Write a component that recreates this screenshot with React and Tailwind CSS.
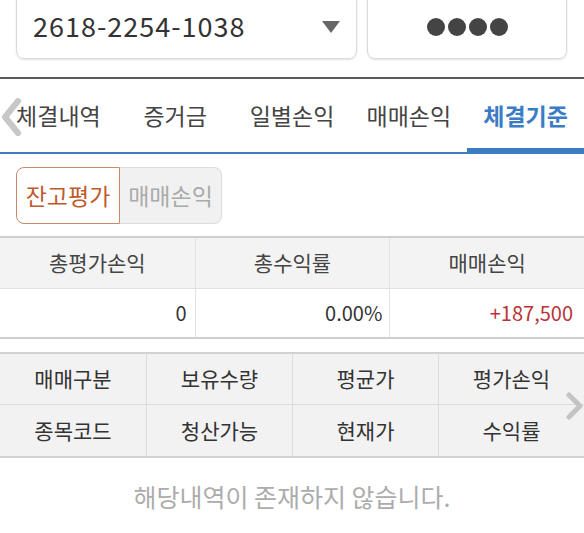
import React, { useState } from 'react'

const font = { fontFamily: '"Noto Sans CJK KR", "Noto Sans", sans-serif' }

const tabs = ['체결내역', '증거금', '일별손익', '매매손익', '체결기준']

const summary = [
  { label: '총평가손익', value: '0', color: 'text-[#333]', pad: 'pr-2' },
  { label: '총수익률', value: '0.00%', color: 'text-[#333]', pad: 'pr-[7px]' },
  { label: '매매손익', value: '+187,500', color: 'text-[#b8343a]', pad: 'pr-[11px]' },
]

const columns = [
  ['매매구분', '종목코드'],
  ['보유수량', '청산가능'],
  ['평균가', '현재가'],
  ['평가손익', '수익률'],
]

const App = () => {
  const [activeTab, setActiveTab] = useState(4)
  const [mode, setMode] = useState('balance')

  return (
    <div className="w-[584px] h-[533px] overflow-hidden bg-white text-[#333]" style={font}>
      {/* account row */}
      <div className="flex gap-[10px] pl-4 pr-[17px] pb-[18px]">
        <div className="-mt-[12px] h-[71px] w-[341px] flex items-center justify-between pl-[16px] pr-[16px] pt-[6px] border border-[#dadada] rounded-lg shadow-[0_1px_2px_rgba(0,0,0,0.12)]">
          <span className="text-[27px] tracking-[1px] text-[#333]">2618-2254-1038</span>
          <svg width="18" height="12" viewBox="0 0 18 12">
            <polygon points="0,0 18,0 9,12" fill="#666" />
          </svg>
        </div>
        <div className="-mt-[12px] h-[71px] flex-1 flex items-center justify-center pt-[6px] border border-[#dadada] rounded-lg shadow-[0_1px_2px_rgba(0,0,0,0.12)]">
          <div className="flex gap-[3px]">
            {[0, 1, 2, 3].map(i => (
              <span key={i} className="w-[18px] h-[18px] rounded-full bg-[#444]" />
            ))}
          </div>
        </div>
      </div>

      <div className="border-t-2 border-[#595959]" />

      {/* tabs */}
      <div className="relative flex h-[75px] border-b-2 border-[#3b7cc4]">
        {tabs.map((t, i) => (
          <button
            key={t}
            onClick={() => setActiveTab(i)}
            className={`w-1/5 flex items-center justify-center pt-[3px] border-b-[4px] text-[23px] ${
              i === activeTab ? 'border-[#3b7cc4] text-[#3b7cc4] font-bold' : 'border-transparent text-[#444]'
            }`}
          >
            {t}
          </button>
        ))}
        <svg className="absolute left-0 top-[19px]" width="22" height="38" viewBox="0 0 22 38">
          <polyline points="18,3 5,19 18,35" fill="none" stroke="#bdbdbd" strokeWidth="6" strokeLinejoin="round" strokeLinecap="round" opacity="0.85" />
        </svg>
      </div>

      {/* segmented */}
      <div className="flex pl-4 pt-[13px]">
        <button
          onClick={() => setMode('balance')}
          className={`w-[104px] h-[57px] rounded-l-lg text-[23px] border ${
            mode === 'balance' ? 'bg-white border-[#c98a6c] text-[#c05a2c]' : 'bg-[#f1f1f1] border-[#dcdcdc] text-[#aaa]'
          }`}
        >
          잔고평가
        </button>
        <button
          onClick={() => setMode('trade')}
          className={`w-[102px] h-[57px] rounded-r-lg text-[23px] border border-l-0 ${
            mode === 'trade' ? 'bg-white border-[#c98a6c] text-[#c05a2c]' : 'bg-[#f1f1f1] border-[#dcdcdc] text-[#aaa]'
          }`}
        >
          매매손익
        </button>
      </div>

      {/* summary table */}
      <div className="mt-[12px] grid grid-cols-3 border-t-2 border-b-2 border-[#cfcfcf]">
        {summary.map((s, i) => (
          <div key={s.label} className={`h-[51px] flex items-center justify-center bg-[#f3f3f3] text-[21px] text-[#444] border-b border-[#e2e2e2] ${i > 0 ? 'border-l' : ''}`}>
            {s.label}
          </div>
        ))}
        {summary.map((s, i) => (
          <div key={s.label + 'v'} className={`h-[48px] flex items-center justify-end text-[20px] border-[#e2e2e2] ${s.pad} ${s.color} ${i > 0 ? 'border-l' : ''}`}>
            {s.value}
          </div>
        ))}
      </div>

      {/* list header */}
      <div className="relative mt-[13px] grid grid-cols-4 bg-[#f2f2f2] border-t-2 border-b-2 border-[#d2d2d2]">
        {columns.map((col, i) => (
          <div key={col[0]} className={`flex flex-col border-[#dcdcdc] ${i > 0 ? 'border-l' : ''}`}>
            <div className="h-[51px] flex items-center justify-center text-[21px] text-[#333] border-b border-[#dcdcdc]">{col[0]}</div>
            <div className="h-[51px] flex items-center justify-center text-[21px] text-[#333]">{col[1]}</div>
          </div>
        ))}
        <svg className="absolute right-0 top-[38px]" width="18" height="28" viewBox="0 0 18 28">
          <polyline points="3,3 14,14 3,25" fill="none" stroke="#c4c4c4" strokeWidth="5" strokeLinejoin="round" strokeLinecap="round" />
        </svg>
      </div>

      <p className="mt-[20px] text-center text-[25px] text-[#acacac]">해당내역이 존재하지 않습니다.</p>
    </div>
  )
}

export default App
